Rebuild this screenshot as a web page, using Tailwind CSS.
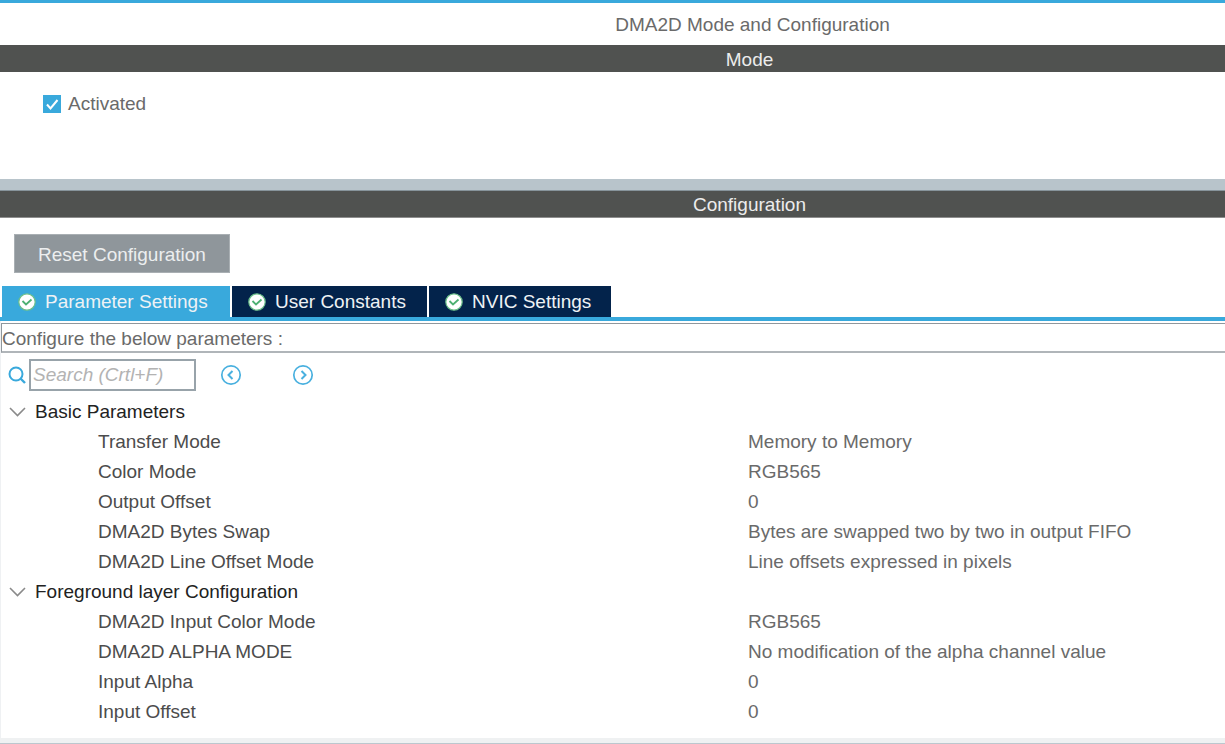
<!DOCTYPE html>
<html lang="en">
<head>
<meta charset="utf-8">
<title>DMA2D Mode and Configuration</title>
<script src="https://cdn.jsdelivr.net/npm/@tailwindcss/browser@4"></script>
</head>
<body class="min-h-screen flex flex-col overflow-x-hidden bg-white border-t-3 border-[#39a9dc] font-['Liberation_Sans',Arial,sans-serif] text-[19px] leading-[30px] text-[#6a6a6a]">
<h1 class="h-[42px] flex items-center justify-center pt-[2px] pl-[280px]">DMA2D Mode and Configuration</h1>
<section>
  <h2 class="h-[27px] flex items-center justify-center pt-[2px] pl-[274px] bg-[#505250] text-[#ececec]">Mode</h2>
  <div class="h-[107px] px-[43px] pt-[17px]">
    <label class="inline-flex items-center gap-[7px]">
      <span class="grid size-[18px]">
        <input type="checkbox" checked class="appearance-none col-start-1 row-start-1 size-[18px] bg-white border border-[#39a9dc] checked:bg-[#39a9dc] peer">
        <svg class="col-start-1 row-start-1 size-[18px] pointer-events-none invisible peer-checked:visible" viewBox="0 0 18 18" fill="none" stroke="#fff" stroke-width="2"><path d="M4 9.500 7.500 13.500 14.500 5"/></svg>
      </span>
      Activated
    </label>
  </div>
</section>
<div class="h-3 bg-[#b8c4cb] border-b border-[#87949b]"></div>
<main class="grow flex flex-col">
  <h2 class="h-[27px] flex items-center justify-center pt-[2px] pl-[274px] bg-[#505250] text-[#ececec] border-b border-[#8e8e8e]">Configuration</h2>
  <div class="px-3.5 pt-4 pb-[13px] flex">
    <button type="button" class="h-[39px] px-[23px] pt-[2px] bg-[#8f969b] border border-[#a9afb3] text-[#eceeef]">Reset Configuration</button>
  </div>
  <div role="tablist" class="flex gap-[2px] pl-[2px] h-[35px] border-b-4 border-[#39a9dc] text-[#eef2f5]">
    <button type="button" role="tab" aria-selected="true" class="flex items-center gap-[9px] pl-4 w-[228px] bg-[#39a9dc]">
      <svg class="size-[18px]" viewBox="0 0 18 18"><circle cx="9" cy="9" r="8.200" fill="#fff" stroke="#6cc08a" stroke-width="1.200"/><path d="M4.500 8 8 11.500 13.500 6.500" fill="none" stroke="#4db072" stroke-width="1.800"/></svg>
      <span>Parameter Settings</span>
    </button>
    <button type="button" role="tab" aria-selected="false" class="flex items-center gap-[9px] pl-4 w-[195px] bg-[#03234b]">
      <svg class="size-[18px]" viewBox="0 0 18 18"><circle cx="9" cy="9" r="8.200" fill="#fff" stroke="#6cc08a" stroke-width="1.200"/><path d="M4.500 8 8 11.500 13.500 6.500" fill="none" stroke="#4db072" stroke-width="1.800"/></svg>
      <span>User Constants</span>
    </button>
    <button type="button" role="tab" aria-selected="false" class="flex items-center gap-[9px] pl-4 w-[182px] bg-[#03234b]">
      <svg class="size-[18px]" viewBox="0 0 18 18"><circle cx="9" cy="9" r="8.200" fill="#fff" stroke="#6cc08a" stroke-width="1.200"/><path d="M4.500 8 8 11.500 13.500 6.500" fill="none" stroke="#4db072" stroke-width="1.800"/></svg>
      <span>NVIC Settings</span>
    </button>
  </div>
  <div class="grow flex flex-col pt-[2px] border-l border-[#eff1f3]">
    <p class="h-[30px] flex items-center pt-[2px] border-t border-l border-b-2 border-t-[#8f979d] border-l-[#8f979d] border-b-[#b0b5b9]">Configure the below parameters :</p>
    <div class="flex items-center h-[44px] pl-[7px]">
      <svg class="size-[18px] mr-[3px]" viewBox="0 0 18 18" fill="none" stroke="#39a9dc" stroke-width="2"><circle cx="8" cy="8" r="6.500"/><path d="M12.500 12.500 17 17" stroke-width="2.400"/></svg>
      <input type="search" aria-label="Search" placeholder="Search (Crtl+F)" class="w-[167px] h-[32px] px-[2px] border-2 border-[#98a3aa] placeholder:text-[#b3b3b3] placeholder:italic outline-none">
      <button type="button" aria-label="Previous" class="ml-[24px]">
        <svg class="size-[22px]" viewBox="0 0 22 22" fill="none" stroke="#49b0df"><circle cx="11" cy="11" r="9.200" stroke-width="1.700"/><path d="M12.500 7 8.500 11 12.500 15" stroke-width="2"/></svg>
      </button>
      <button type="button" aria-label="Next" class="ml-[50px]">
        <svg class="size-[22px]" viewBox="0 0 22 22" fill="none" stroke="#49b0df"><circle cx="11" cy="11" r="9.200" stroke-width="1.700"/><path d="M9.500 7 13.500 11 9.500 15" stroke-width="2"/></svg>
      </button>
    </div>
    <table class="w-full table-fixed border-collapse text-left">
      <colgroup><col class="w-[747px]"><col></colgroup>
      <tbody>
        <tr class="h-[30px] text-[#222]"><th colspan="2" class="p-0 font-normal"><button type="button" class="flex items-center gap-[9px] pl-2"><svg class="w-[17px] h-[10px]" viewBox="0 0 17 10" fill="none" stroke="#8a8a8a" stroke-width="1.600"><path d="M1 1 8.500 8.500 16 1"/></svg>Basic Parameters</button></th></tr>
        <tr class="h-[30px]"><th class="p-0 pl-[97px] font-normal text-[#4c4c4c]">Transfer Mode</th><td class="p-0">Memory to Memory</td></tr>
        <tr class="h-[30px]"><th class="p-0 pl-[97px] font-normal text-[#4c4c4c]">Color Mode</th><td class="p-0">RGB565</td></tr>
        <tr class="h-[30px]"><th class="p-0 pl-[97px] font-normal text-[#4c4c4c]">Output Offset</th><td class="p-0">0</td></tr>
        <tr class="h-[30px]"><th class="p-0 pl-[97px] font-normal text-[#4c4c4c]">DMA2D Bytes Swap</th><td class="p-0">Bytes are swapped two by two in output FIFO</td></tr>
        <tr class="h-[30px]"><th class="p-0 pl-[97px] font-normal text-[#4c4c4c]">DMA2D Line Offset Mode</th><td class="p-0">Line offsets expressed in pixels</td></tr>
        <tr class="h-[30px] text-[#222]"><th colspan="2" class="p-0 font-normal"><button type="button" class="flex items-center gap-[9px] pl-2"><svg class="w-[17px] h-[10px]" viewBox="0 0 17 10" fill="none" stroke="#8a8a8a" stroke-width="1.600"><path d="M1 1 8.500 8.500 16 1"/></svg>Foreground layer Configuration</button></th></tr>
        <tr class="h-[30px]"><th class="p-0 pl-[97px] font-normal text-[#4c4c4c]">DMA2D Input Color Mode</th><td class="p-0">RGB565</td></tr>
        <tr class="h-[30px]"><th class="p-0 pl-[97px] font-normal text-[#4c4c4c]">DMA2D ALPHA MODE</th><td class="p-0">No modification of the alpha channel value</td></tr>
        <tr class="h-[30px]"><th class="p-0 pl-[97px] font-normal text-[#4c4c4c]">Input Alpha</th><td class="p-0">0</td></tr>
        <tr class="h-[30px]"><th class="p-0 pl-[97px] font-normal text-[#4c4c4c]">Input Offset</th><td class="p-0">0</td></tr>
      </tbody>
    </table>
  </div>
</main>
<footer class="h-[6px] bg-[#eff1f2] border-b border-[#bcc7ce]"></footer>
</body>
</html>
